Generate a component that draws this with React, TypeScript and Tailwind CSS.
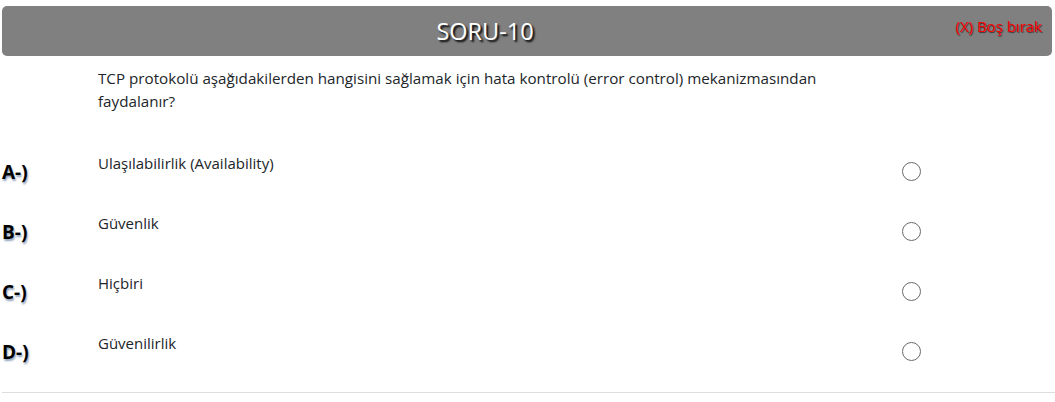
import React from "react";

const options = [
  { key: "A-)", text: "Ulaşılabilirlik (Availability)" },
  { key: "B-)", text: "Güvenlik" },
  { key: "C-)", text: "Hiçbiri" },
  { key: "D-)", text: "Güvenilirlik" },
];

export default function App() {
  return (
    <div className="w-[1055px] h-[402px] bg-white overflow-hidden font-['Open_Sans',sans-serif] text-[#212529]">
      <div className="pt-[6px] pl-[2px] pr-[3px]">
        <div className="relative h-[50px] rounded-[5px] bg-[#808080] flex items-center">
          <div className="w-[966px] pt-[2px] text-center text-[23.5px] text-white [text-shadow:2px_2px_2px_#000]">
            SORU-10
          </div>
          <div className="absolute right-[10px] top-[9px] text-[15px] text-[#ff0000] [text-shadow:1px_1px_1px_#333]">
            (X) Boş bırak
          </div>
        </div>
      </div>
      <div className="pl-[98px] pt-[11px] w-[840px] text-[15.2px] leading-[23px]">
        TCP protokolü aşağıdakilerden hangisini sağlamak için hata kontrolü (error control) mekanizmasından faydalanır?
      </div>
      <div className="pt-[40px]">
        {options.map((o) => (
          <div key={o.key} className="flex h-[60px] pl-[2px]">
            <div className="w-[96px] pt-[5px] text-[19px] font-bold text-black [text-shadow:1px_2px_2px_#8fa0bb]">
              {o.key}
            </div>
            <div className="w-[804px] text-[15px] leading-[20px]">{o.text}</div>
            <div className="pt-[9px]">
              <div className="w-[19px] h-[19px] rounded-full border-[1.5px] border-[#6b6b6b] bg-white" />
            </div>
          </div>
        ))}
      </div>
      <div className="ml-[2px] mt-[-1px] border-t border-[#dedede]" />
    </div>
  );
}
